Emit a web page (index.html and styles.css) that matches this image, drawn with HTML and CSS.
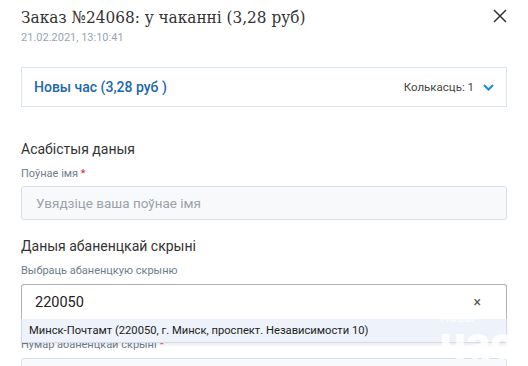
FILE: index.html
```html
<!DOCTYPE html>
<html lang="be">
<head>
    <meta charset="UTF-8">
    <meta name="viewport" content="width=device-width, initial-scale=1.0">
    <title>Заказ №24068</title>
    <link rel="stylesheet" href="styles.css">
</head>
<body>
    <div class="modal">
        <!-- Header -->
        <div class="modal-header">
            <div>
                <h1 class="modal-title">Заказ №24068: у чаканні (3,28 руб)</h1>
                <div class="modal-date">21.02.2021, 13:10:41</div>
            </div>
            <button class="close-btn" aria-label="Закрыць">
                <svg width="14" height="14" viewBox="0 0 14 14">
                    <path d="M1 1L13 13M13 1L1 13" stroke="#333" stroke-width="1.5" fill="none"/>
                </svg>
            </button>
        </div>

        <!-- Order item -->
        <div class="accordion">
            <span class="accordion-title">Новы час (3,28 руб )</span>
            <span class="accordion-meta">
                Колькасць: 1
                <svg width="11" height="7" viewBox="0 0 11 7">
                    <path d="M1 1l4.5 4.5L10 1" stroke="#1a8bdb" stroke-width="2" fill="none"/>
                </svg>
            </span>
        </div>

        <!-- Personal data -->
        <h2 class="section-title first">Асабістыя даныя</h2>
        <label class="field-label">Поўнае імя <span class="req">*</span></label>
        <input class="text-input" type="text" placeholder="Увядзіце ваша поўнае імя">

        <!-- Post box -->
        <h2 class="section-title">Даныя абаненцкай скрыні</h2>
        <label class="field-label">Выбраць абаненцкую скрыню</label>
        <div class="select-wrap">
            <div class="select-box">
                <span class="select-value">220050</span>
                <span class="select-clear">×</span>
            </div>
            <div class="select-menu">
                <div class="select-option">Минск-Почтамт (220050, г. Минск, проспект. Независимости 10)</div>
            </div>
        </div>
        <label class="field-label after-select">Нумар абаненцкай скрыні <span class="req">*</span></label>
        <input class="text-input" type="text">
    </div>

    <div class="watermark">
        <span class="wm-small">Новы</span>
        <span class="wm-big">час</span>
    </div>
</body>
</html>
```

FILE: styles.css
```css
body {
    font-family: Roboto, "Noto Sans", sans-serif;
    background-color: #fff;
    color: #333;
    margin: 0;
    padding: 0;
    overflow: hidden;
}
.modal {
    padding: 4px 21px 0 21px;
}
.modal-header {
    display: flex;
    justify-content: space-between;
    align-items: flex-start;
}
.modal-title {
    font-family: "DejaVu Serif Condensed", "DejaVu Serif", serif;
    font-stretch: condensed;
    font-weight: normal;
    font-size: 17px;
    line-height: 26px;
    color: #333;
    margin: 0;
}
.modal-date {
    font-size: 11px;
    line-height: 16px;
    color: #9aa3b5;
}
.close-btn {
    background: none;
    border: none;
    padding: 0;
    margin: 5px 0 0 0;
    cursor: pointer;
}
.accordion {
    margin-top: 21px;
    border: 1px solid #dbe5f1;
    height: 38px;
    display: flex;
    align-items: center;
    justify-content: space-between;
    padding: 0 12px;
}
.accordion-title {
    font-size: 14px;
    font-weight: 500;
    color: #2067ae;
}
.accordion-meta {
    font-size: 11.5px;
    color: #444;
    display: flex;
    align-items: center;
    gap: 9px;
}
.section-title {
    font-size: 14px;
    font-weight: normal;
    line-height: 22px;
    color: #333;
    margin: 15px 0 0 0;
}
.section-title.first {
    margin-top: 31px;
}
.field-label {
    display: block;
    font-size: 11px;
    line-height: 16px;
    color: #6f7c8e;
    margin-top: 6px;
}
.req {
    color: #e5262d;
}
.text-input {
    display: block;
    box-sizing: border-box;
    width: 100%;
    height: 34px;
    margin-top: 4px;
    background-color: #f8f9fb;
    border: 1px solid #d6e1ee;
    border-radius: 3px;
    padding: 0 14px;
    font-family: inherit;
    font-size: 13.5px;
    color: #333;
}
.text-input::placeholder {
    color: #9ba1a8;
}
.select-wrap {
    position: relative;
    margin-top: 5px;
}
.select-box {
    box-sizing: border-box;
    height: 35px;
    border: 1px solid #b3b3b3;
    border-bottom: none;
    border-radius: 3px 3px 0 0;
    display: flex;
    align-items: center;
    justify-content: space-between;
    padding: 0 25px 0 13px;
    background-color: #fff;
}
.select-value {
    font-size: 14.5px;
    color: #222;
}
.select-clear {
    font-size: 14px;
    color: #555;
}
.select-menu {
    position: absolute;
    left: 0;
    right: 0;
    top: 35px;
    z-index: 2;
    background-color: #eef3fb;
    border: 1px solid #d3dbe6;
    border-top: none;
    box-shadow: 0 2px 3px rgba(0, 0, 0, 0.08);
}
.select-option {
    font-size: 11.2px;
    color: #222;
    line-height: 23px;
    padding: 0 7px;
}
.field-label.after-select {
    margin-top: 18px;
}
.field-label.after-select + .text-input {
    margin-top: 5px;
}
.watermark {
    position: absolute;
    left: 440px;
    top: 311px;
    z-index: 3;
    color: rgba(255, 255, 255, 0.85);
    line-height: 1;
    pointer-events: none;
}
.wm-small {
    display: block;
    font-size: 13px;
}
.wm-big {
    display: block;
    font-size: 46px;
    font-weight: 900;
    margin-top: -4px;
}
```
